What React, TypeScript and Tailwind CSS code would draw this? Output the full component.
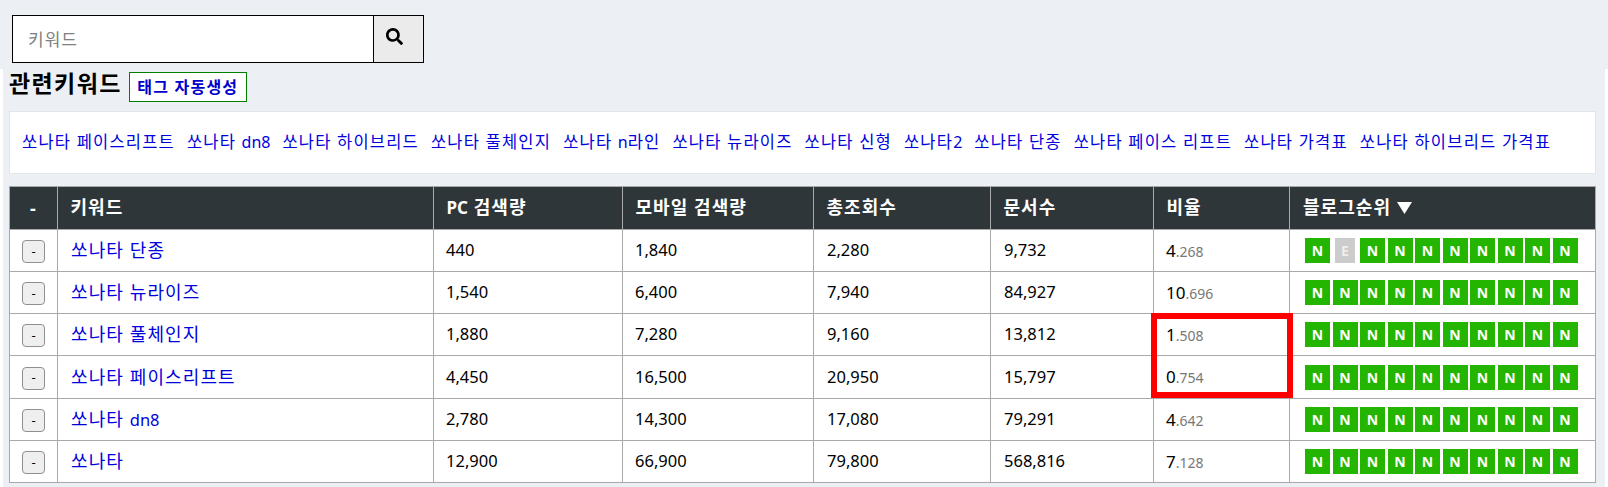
import React from 'react';
import { FaSearch } from 'react-icons/fa';

const related = [
  '쏘나타 페이스리프트',
  '쏘나타 dn8',
  '쏘나타 하이브리드',
  '쏘나타 풀체인지',
  '쏘나타 n라인',
  '쏘나타 뉴라이즈',
  '쏘나타 신형',
  '쏘나타2',
  '쏘나타 단종',
  '쏘나타 페이스 리프트',
  '쏘나타 가격표',
  '쏘나타 하이브리드 가격표',
];

const rows = [
  { name: '쏘나타 단종', pc: '440', mobile: '1,840', total: '2,280', docs: '9,732', ratio: '4', frac: '.268', h: 'h-[42px]' },
  { name: '쏘나타 뉴라이즈', pc: '1,540', mobile: '6,400', total: '7,940', docs: '84,927', ratio: '10', frac: '.696', h: 'h-[42px]' },
  { name: '쏘나타 풀체인지', pc: '1,880', mobile: '7,280', total: '9,160', docs: '13,812', ratio: '1', frac: '.508', h: 'h-[42px]' },
  { name: '쏘나타 페이스리프트', pc: '4,450', mobile: '16,500', total: '20,950', docs: '15,797', ratio: '0', frac: '.754', h: 'h-[43px]' },
  { name: '쏘나타 dn8', pc: '2,780', mobile: '14,300', total: '17,080', docs: '79,291', ratio: '4', frac: '.642', h: 'h-[42px]' },
  { name: '쏘나타', pc: '12,900', mobile: '66,900', total: '79,800', docs: '568,816', ratio: '7', frac: '.128', h: 'h-[42px]' },
];

const headers = [
  { label: '키워드', w: 'w-[376px]' },
  { label: 'PC 검색량', w: 'w-[189px]' },
  { label: '모바일 검색량', w: 'w-[191px]' },
  { label: '총조회수', w: 'w-[177px]' },
  { label: '문서수', w: 'w-[163px]' },
  { label: '비율', w: 'w-[136px]' },
];

// hangul gets tracking to reach the wider advance, latin and digits stay tight
function Mixed({ text, latin }: { text: string; latin: string }) {
  return (
    <>
      {text.split(/([A-Za-z0-9]+)/).map((part, i) =>
        i % 2 === 1 ? (
          <span key={i} className={`tracking-normal ${latin}`}>
            {part}
          </span>
        ) : (
          part
        ),
      )}
    </>
  );
}

function Badge({ type }: { type: 'N' | 'E' }) {
  if (type === 'E') {
    return (
      <span className="mx-[2.5px] flex h-[25px] w-[20px] items-center justify-center bg-[#cccccc] text-[14px] font-bold text-[#eeeeee]">
        E
      </span>
    );
  }
  return (
    <span className="flex h-[25px] w-[25px] items-center justify-center bg-[#23b500] text-[14px] font-bold text-white">
      N
    </span>
  );
}

export default function App() {
  return (
    <div className="h-[487px] w-[1608px] overflow-hidden bg-white font-['Noto_Sans','Noto_Sans_CJK_KR',sans-serif] text-black">
      <div className="h-[69px] bg-[#ecf0f5] pl-[12px] pt-[15px]">
        <div className="flex h-[48px] w-[412px] border border-black">
          <div className="flex flex-1 items-center bg-white px-[15px] pt-[1px] text-[17px] tracking-[1px] text-[#808080]">키워드</div>
          <div className="flex w-[50px] items-center justify-center border-l border-black bg-[#ebebeb]">
            <FaSearch className="h-[17px] w-[17px] -translate-x-[4px] -translate-y-[3px] text-black" />
          </div>
        </div>
      </div>

      <div className="mx-[3px] h-[418px] bg-[#ecf0f5] pl-[6px] pr-[9px]">
        <div className="flex h-[32px] items-start">
          <h2 className="mt-[3px] text-[23px] font-bold leading-none tracking-[1.4px]">관련키워드</h2>
          <button className="ml-[7px] mt-[3px] h-[30px] w-[118px] border border-[#008000] bg-white text-[16px] font-bold tracking-[1.2px] text-[#0000cc]">
            태그 자동생성
          </button>
        </div>

        <div className="mt-[10px] flex h-[63px] items-center gap-x-[12px] border border-[#e2e6ea] bg-white px-[12px] text-[16.5px] tracking-[1.2px] text-[#0000dd]">
          {related.map((k) => (
            <a key={k} className="whitespace-nowrap">
              <Mixed text={k} latin="text-[16px]" />
            </a>
          ))}
        </div>

        <div className="relative mt-[12px]">
          <table className="w-[1587px] table-fixed border-collapse text-[16.5px]">
            <thead>
              <tr className="h-[43px] bg-[#2f3639] text-[18px] font-bold tracking-[1.05px] text-white">
                <th className="w-[48px] border border-[#a9a9a9] text-center">-</th>
                {headers.map((h) => (
                  <th key={h.label} className={`${h.w} border border-[#a9a9a9] px-[12.5px] pb-[2px] text-left font-bold`}>
                    <Mixed text={h.label} latin="text-[17px]" />
                  </th>
                ))}
                <th className="border border-[#a9a9a9] px-[13px] pb-[2px] text-left font-bold">
                  <span className="flex items-center gap-[6px]">
                    블로그순위
                    <svg width="15" height="12" viewBox="0 0 15 12" className="mt-[2px]">
                      <path d="M0 0h15L7.500 12z" fill="#ffffff" />
                    </svg>
                  </span>
                </th>
              </tr>
            </thead>
            <tbody className="bg-white">
              {rows.map((r, i) => (
                <tr key={r.name} className={r.h}>
                  <td className="border border-[#a9a9a9] text-center">
                    <button className="inline-flex h-[23px] w-[23px] items-center justify-center rounded-[4px] border border-[#8f8f8f] bg-[#efefef] align-middle text-[13px]">
                      -
                    </button>
                  </td>
                  <td className="border border-[#a9a9a9] px-[13px] text-[18px] tracking-[1.1px] text-[#0000dd]">
                    <Mixed text={r.name} latin="text-[16.5px]" />
                  </td>
                  <td className="border border-[#a9a9a9] px-[12px]">{r.pc}</td>
                  <td className="border border-[#a9a9a9] px-[12px]">{r.mobile}</td>
                  <td className="border border-[#a9a9a9] px-[13px]">{r.total}</td>
                  <td className="border border-[#a9a9a9] px-[13px]">{r.docs}</td>
                  <td className="border border-[#a9a9a9] px-[12px] text-[17px]">
                    {r.ratio}
                    <span className="text-[14px] text-[#777777]">{r.frac}</span>
                  </td>
                  <td className="border border-[#a9a9a9] pl-[15px]">
                    <div className="flex gap-[2.5px]">
                      {Array.from({ length: 10 }).map((_, n) => (
                        <Badge key={n} type={i === 0 && n === 1 ? 'E' : 'N'} />
                      ))}
                    </div>
                  </td>
                </tr>
              ))}
            </tbody>
          </table>
          <div className="pointer-events-none absolute left-[1142px] top-[127px] h-[85px] w-[142px] border-[6px] border-[#ff0000]" />
        </div>
      </div>
    </div>
  );
}
